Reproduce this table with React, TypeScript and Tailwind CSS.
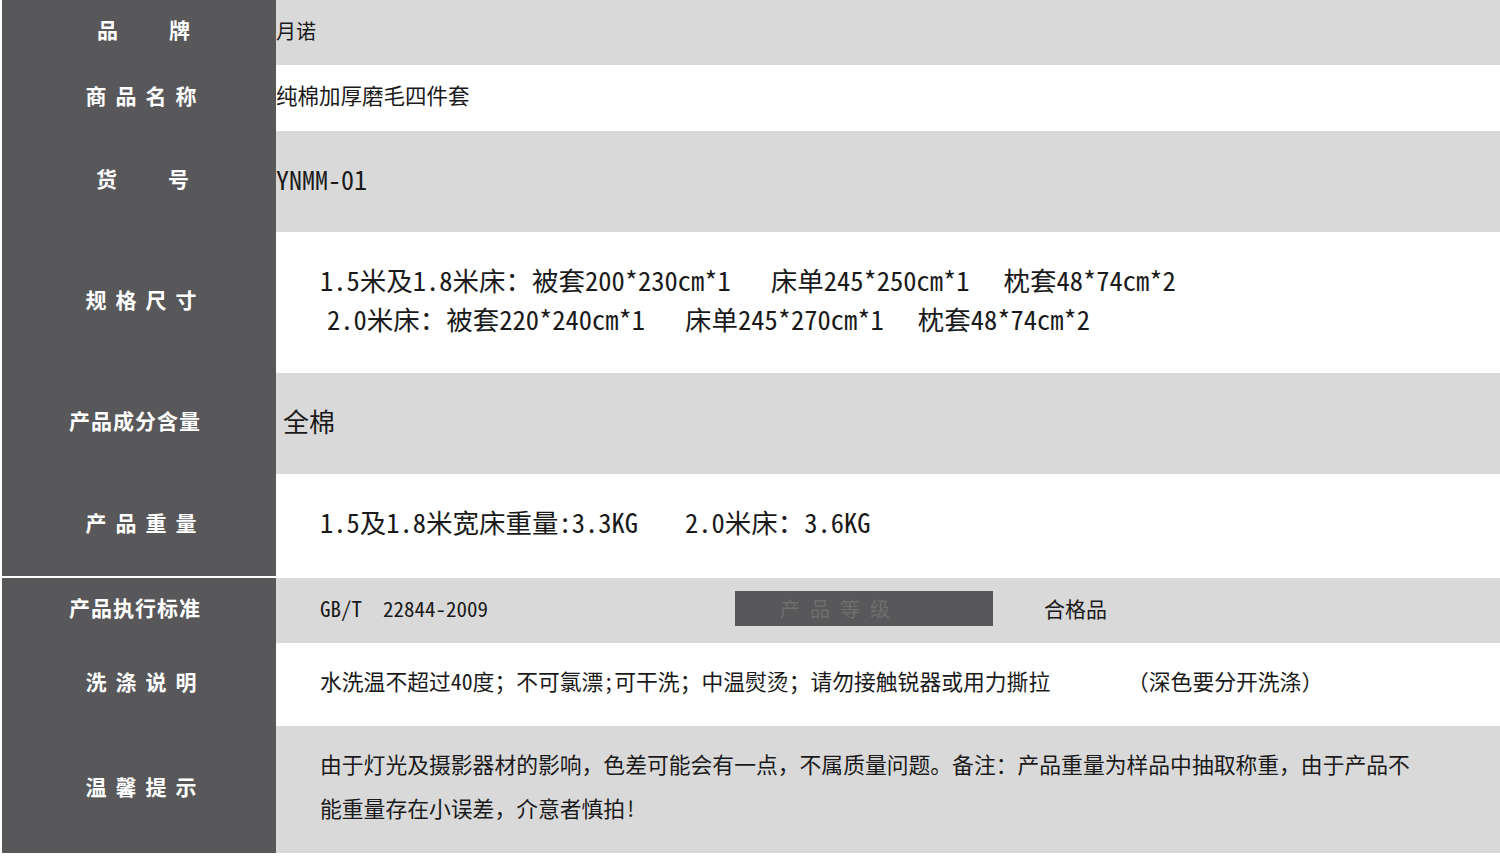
const font = "font-['Noto_Sans_Mono_CJK_SC','Noto_Sans_CJK_SC',sans-serif]";

const Label = ({ chars, gap, shift }: { chars: string[]; gap: string; shift: string }) => (
  <div className={`w-[274px] shrink-0 bg-[#58585a] flex items-center justify-center pb-[5px] text-white font-bold text-[21px] ${shift}`}>
    <div className={`flex ${gap}`}>
      {chars.map((c, i) => (
        <span key={i}>{c}</span>
      ))}
    </div>
  </div>
);

const Row = ({
  h,
  bg,
  pb = "pb-[7px]",
  label,
  children,
}: {
  h: string;
  bg: string;
  pb?: string;
  label: React.ReactNode;
  children: React.ReactNode;
}) => (
  <div className={`flex ${h}`}>
    {label}
    <div className={`flex-1 flex items-center ${pb} ${bg} text-[#1a1a1a] whitespace-pre`}>{children}</div>
  </div>
);

export default function App() {
  const four = "gap-[9px]";
  const two = "gap-[51px]";
  const six = "gap-[1px]";
  return (
    <div className={`w-[1500px] h-[856px] bg-white pl-[2px] flex flex-col ${font}`}>
      <Row h="h-[65px]" bg="bg-[#d9d9d9]" pb="pb-[3px]" label={<Label chars={["品", "牌"]} gap={two} shift="pl-[9px]" />}>
        <span className="text-[20px]">月诺</span>
      </Row>
      <Row h="h-[66px]" bg="bg-white" pb="pb-[5px]" label={<Label chars={["商", "品", "名", "称"]} gap={four} shift="pl-[4px]" />}>
        <span className="text-[21.5px]">纯棉加厚磨毛四件套</span>
      </Row>
      <Row h="h-[101px]" bg="bg-[#d9d9d9]" label={<Label chars={["货", "号"]} gap={two} shift="pl-[7px]" />}>
        <span className="text-[26px]">YNMM-01</span>
      </Row>
      <Row h="h-[141px]" bg="bg-white" label={<Label chars={["规", "格", "尺", "寸"]} gap={four} shift="pl-[4px]" />}>
        <div className="pl-[44px] text-[26.5px] leading-[39px]">
          <div>
            1.5米及1.8米床：被套200*230cm*1<span className="pl-[40px]">床单245*250cm*1</span>
            <span className="pl-[34px]">枕套48*74cm*2</span>
          </div>
          <div className="pl-[7px]">
            2.0米床：被套220*240cm*1<span className="pl-[40px]">床单245*270cm*1</span>
            <span className="pl-[34px]">枕套48*74cm*2</span>
          </div>
        </div>
      </Row>
      <Row h="h-[101px]" bg="bg-[#d9d9d9]" label={<Label chars={["产", "品", "成", "分", "含", "量"]} gap={six} shift="pr-[9px]" />}>
        <span className="pl-[7px] text-[26px]">全棉</span>
      </Row>
      <Row h="h-[102px]" bg="bg-white" label={<Label chars={["产", "品", "重", "量"]} gap={four} shift="pl-[4px]" />}>
        <span className="pl-[44px] text-[26.5px]">1.5及1.8米宽床重量:3.3KG</span>
        <span className="pl-[47px] text-[26.5px]">2.0米床：3.6KG</span>
      </Row>
      <div className="h-[2px] bg-white" />
      <Row h="h-[65px]" bg="bg-[#d9d9d9]" pb="pb-[3px]" label={<Label chars={["产", "品", "执", "行", "标", "准"]} gap={six} shift="pr-[9px]" />}>
        <span className="pl-[44px] w-[459px] text-[21px]">GB/T  22844-2009</span>
        <div className="w-[258px] h-[35px] bg-[#58585a] flex items-center pl-[45px] -mt-[1px]">
          <span className="text-[20px] tracking-[10px] text-[#6e6e6e]">产品等级</span>
        </div>
        <span className="pl-[51px] text-[21px]">合格品</span>
      </Row>
      <Row h="h-[83px]" bg="bg-white" label={<Label chars={["洗", "涤", "说", "明"]} gap={four} shift="pl-[4px]" />}>
        <span className="pl-[44px] w-[851px] text-[21.8px]">
          水洗温不超过40度；不可氯漂;可干洗；中温熨烫；请勿接触锐器或用力撕拉
        </span>
        <span className="text-[21.8px]">（深色要分开洗涤）</span>
      </Row>
      <Row h="h-[127px]" bg="bg-[#d9d9d9]" label={<Label chars={["温", "馨", "提", "示"]} gap={four} shift="pl-[4px]" />}>
        <div className="pl-[44px] text-[21.8px] leading-[44px]">
          <div>由于灯光及摄影器材的影响，色差可能会有一点，不属质量问题。备注：产品重量为样品中抽取称重，由于产品不</div>
          <div>能重量存在小误差，介意者慎拍!</div>
        </div>
      </Row>
    </div>
  );
}
